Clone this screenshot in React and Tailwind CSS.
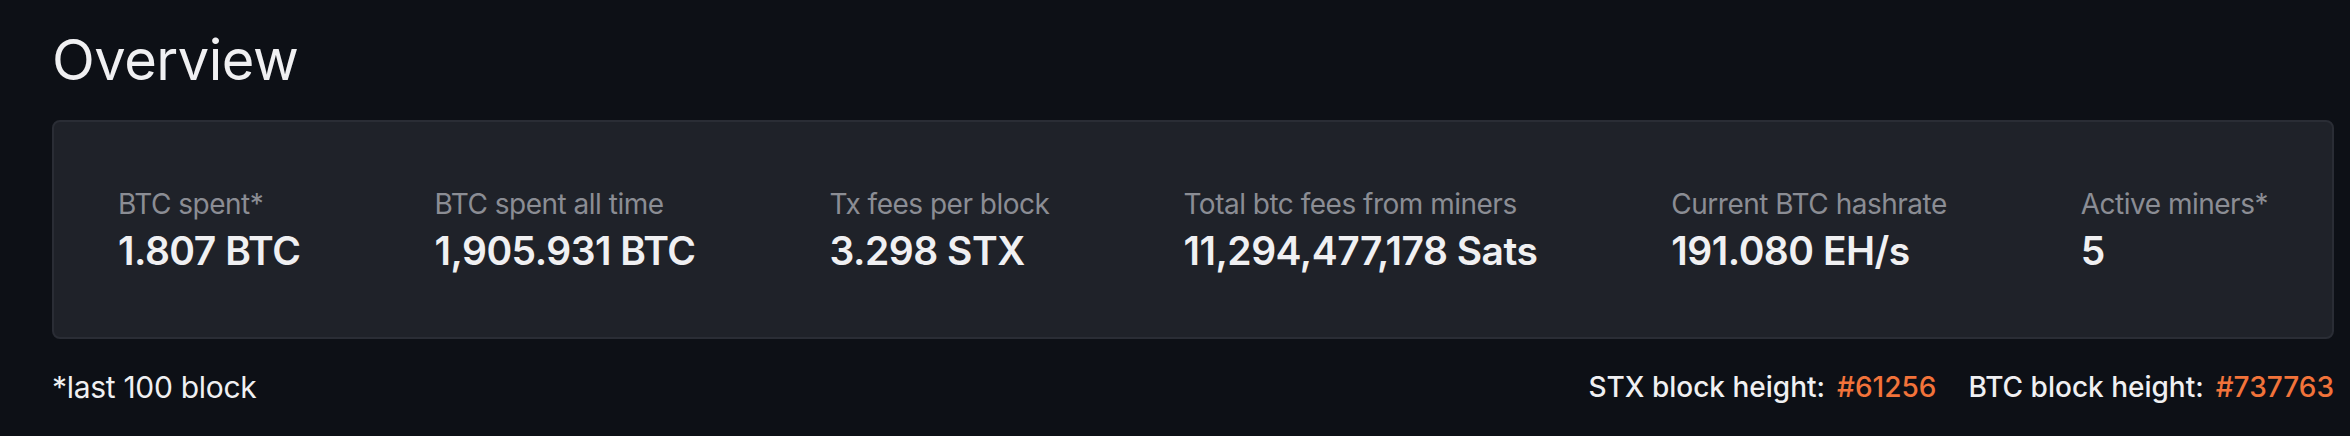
import React from 'react';

const stats = [
  { label: 'BTC spent*', value: '1.807 BTC' },
  { label: 'BTC spent all time', value: '1,905.931 BTC' },
  { label: 'Tx fees per block', value: '3.298 STX' },
  { label: 'Total btc fees from miners', value: '11,294,477,178 Sats' },
  { label: 'Current BTC hashrate', value: '191.080 EH/s' },
  { label: 'Active miners*', value: '5' },
];

const App = () => {
  return (
    <div
      className="min-h-screen w-full bg-[#0d1016] text-[#f0f0f2] pl-[52px] pr-[16px] pt-[24px]"
      style={{ fontFamily: 'Inter, "Noto Sans", sans-serif' }}
    >
      {/* Header */}
      <h1 className="text-[56px] leading-[72px] font-normal tracking-[-0.5px]">Overview</h1>

      {/* Stats card */}
      <div className="mt-[24px] h-[219px] rounded-lg border-2 border-[#2a2d35] bg-[#1f2229] px-[64px] flex items-center justify-between">
        {stats.map((s) => (
          <div key={s.label} className="flex flex-col">
            <span className="text-[28px] leading-[34px] text-[#8b8d94] tracking-[-0.5px]">{s.label}</span>
            <span className="mt-2 text-[39px] leading-[44px] font-semibold text-[#f0f0f2] tracking-[-0.5px]">{s.value}</span>
          </div>
        ))}
      </div>

      {/* Footer */}
      <div className="mt-[30px] flex items-center justify-between leading-[36px]">
        <span className="text-[30px] font-normal text-[#f0f0f2] tracking-[-0.3px]">*last 100 block</span>
        <div className="flex items-center gap-[32px] text-[28px] font-medium">
          <span>
            STX block height:<span className="ml-[12px] text-[#f2733a]">#61256</span>
          </span>
          <span>
            BTC block height:<span className="ml-[12px] text-[#f2733a]">#737763</span>
          </span>
        </div>
      </div>
    </div>
  );
};

export default App;
